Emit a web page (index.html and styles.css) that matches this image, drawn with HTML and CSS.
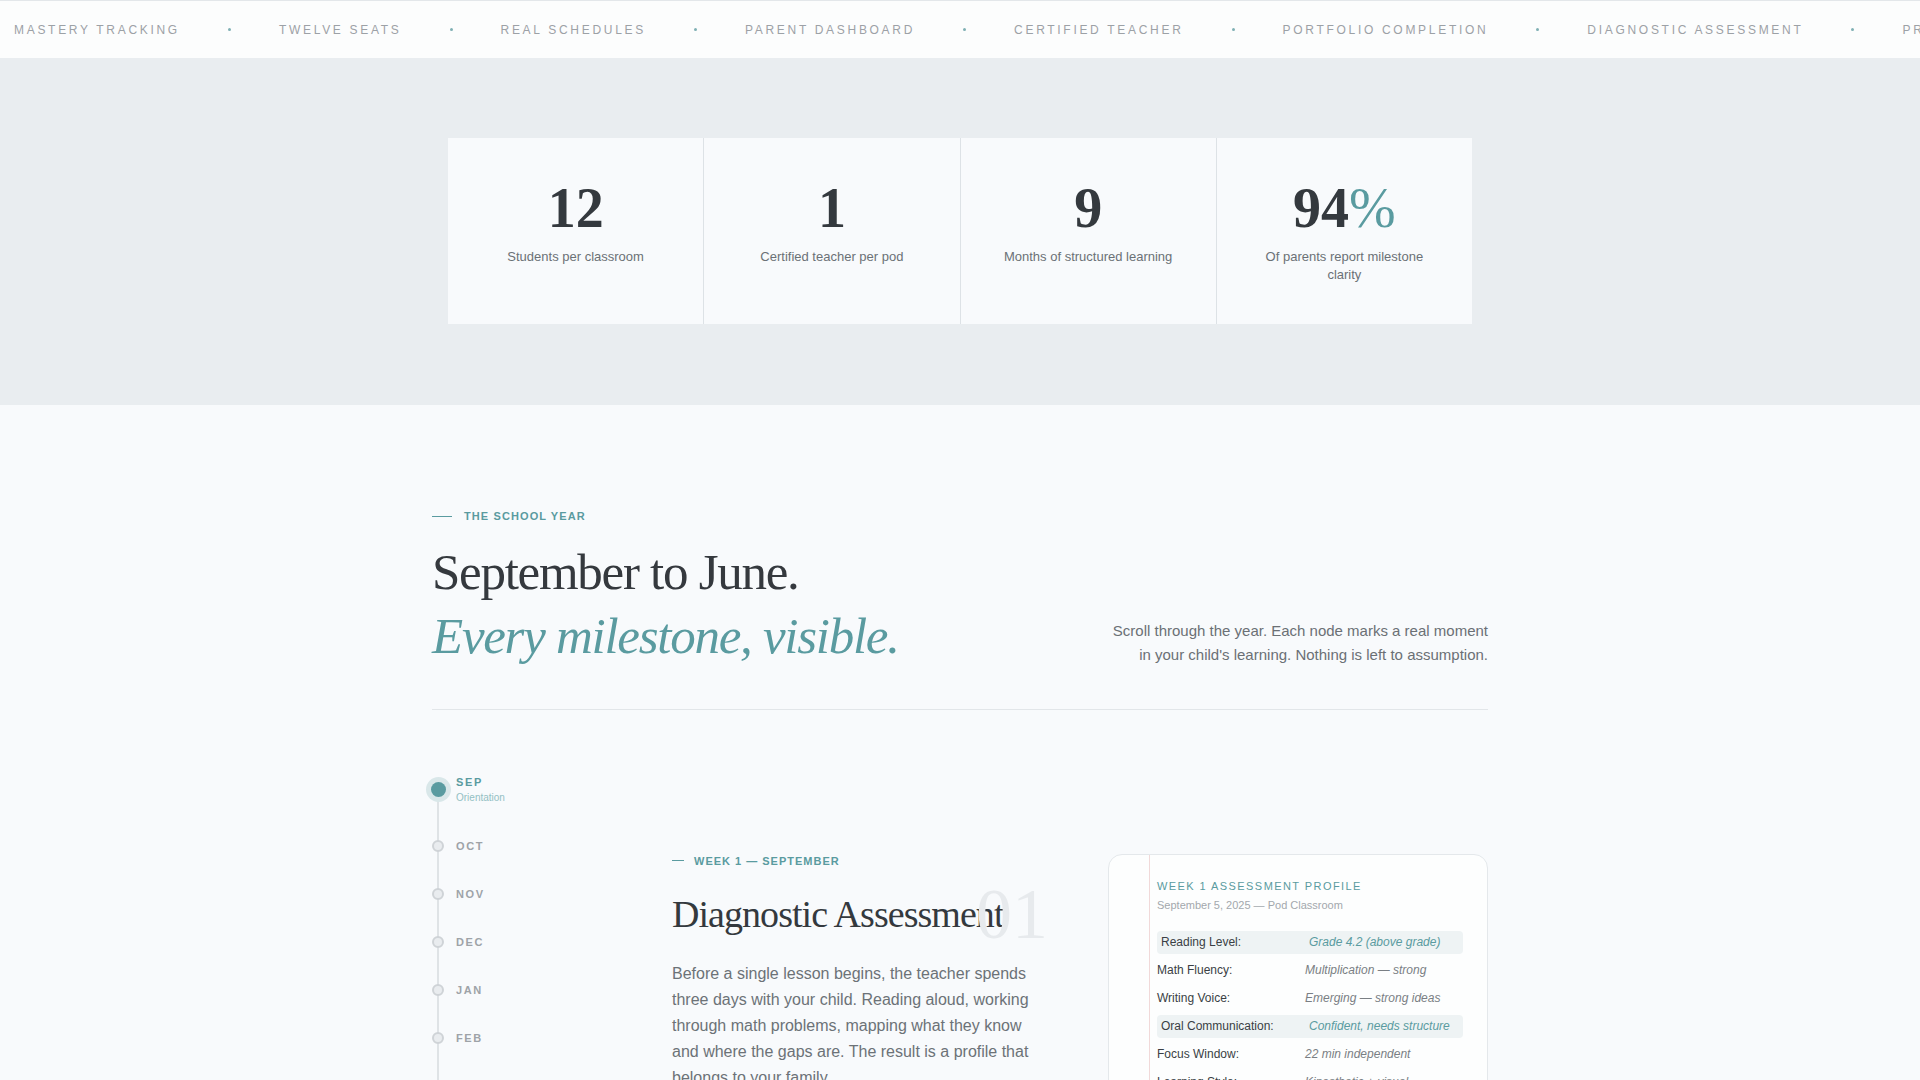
FILE: index.html
```html
<!DOCTYPE html>
<html lang="en">
<head>
  <meta charset="UTF-8">
  <meta name="viewport" content="width=device-width, initial-scale=1.0">
  <title>The School Year</title>
  <link rel="stylesheet" href="styles.css">
</head>
<body>
  <div class="ticker">
    <div class="ticker-track">
      <span>Mastery Tracking</span><i class="dot"></i>
      <span>Twelve Seats</span><i class="dot"></i>
      <span>Real Schedules</span><i class="dot"></i>
      <span>Parent Dashboard</span><i class="dot"></i>
      <span>Certified Teacher</span><i class="dot"></i>
      <span>Portfolio Completion</span><i class="dot"></i>
      <span>Diagnostic Assessment</span><i class="dot"></i>
      <span>Progress Reports</span><i class="dot"></i>
      <span>Mastery Tracking</span>
    </div>
  </div>

  <section class="stats">
    <div class="stats-grid">
      <div class="stat">
        <div class="stat-num">12</div>
        <p>Students per classroom</p>
      </div>
      <div class="stat">
        <div class="stat-num">1</div>
        <p>Certified teacher per pod</p>
      </div>
      <div class="stat">
        <div class="stat-num">9</div>
        <p>Months of structured learning</p>
      </div>
      <div class="stat">
        <div class="stat-num">94<span class="pct">%</span></div>
        <p>Of parents report milestone clarity</p>
      </div>
    </div>
  </section>

  <section class="year">
    <div class="container">
      <div class="year-head">
        <div>
          <div class="eyebrow">The School Year</div>
          <h2>September to June.<br><em>Every milestone, visible.</em></h2>
        </div>
        <p class="year-intro">Scroll through the year. Each node marks a real moment in your child's learning. Nothing is left to assumption.</p>
      </div>

      <div class="year-body">
        <ul class="months">
          <li class="month active">
            <span class="node"></span>
            <div><b>Sep</b><small>Orientation</small></div>
          </li>
          <li class="month"><span class="node"></span><div><b>Oct</b></div></li>
          <li class="month"><span class="node"></span><div><b>Nov</b></div></li>
          <li class="month"><span class="node"></span><div><b>Dec</b></div></li>
          <li class="month"><span class="node"></span><div><b>Jan</b></div></li>
          <li class="month"><span class="node"></span><div><b>Feb</b></div></li>
          <li class="month"><span class="node"></span><div><b>Mar</b></div></li>
          <li class="month"><span class="node"></span><div><b>Apr</b></div></li>
          <li class="month"><span class="node"></span><div><b>May</b></div></li>
          <li class="month"><span class="node"></span><div><b>Jun</b></div></li>
        </ul>

        <article class="step">
          <div class="step-label">Week 1 — September</div>
          <h3>Diagnostic Assessment</h3>
          <span class="step-no">01</span>
          <p>Before a single lesson begins, the teacher spends three days with your child. Reading aloud, working through math problems, mapping what they know and where the gaps are. The result is a profile that belongs to your family.</p>
        </article>

        <div class="profile">
          <div class="profile-title">Week 1 Assessment Profile</div>
          <div class="profile-date">September 5, 2025 — Pod Classroom</div>
          <div class="row hl"><span>Reading Level:</span><em>Grade 4.2 (above grade)</em></div>
          <div class="row"><span>Math Fluency:</span><em>Multiplication — strong</em></div>
          <div class="row"><span>Writing Voice:</span><em>Emerging — strong ideas</em></div>
          <div class="row hl"><span>Oral Communication:</span><em>Confident, needs structure</em></div>
          <div class="row"><span>Focus Window:</span><em>22 min independent</em></div>
          <div class="row"><span>Learning Style:</span><em>Kinesthetic + visual</em></div>
          <div class="row"><span>Social Comfort:</span><em>Warms up by day two</em></div>
        </div>
      </div>
    </div>
  </section>
</body>
</html>
```

FILE: styles.css
```css
body {
  margin: 0;
  padding: 0;
  font-family: "Liberation Sans", Arial, sans-serif;
  background: #f8fafc;
  color: #353a3f;
}

/* ticker */
.ticker {
  background: #fcfdfd;
  border-top: 1px solid #e3e7ea;
  height: 57px;
  overflow: hidden;
  display: flex;
  align-items: center;
}

.ticker-track {
  display: flex;
  align-items: center;
  gap: 48px;
  padding-left: 14px;
  white-space: nowrap;
  font-size: 12px;
  letter-spacing: 2.7px;
  text-transform: uppercase;
  color: #9ca1a6;
}

.ticker-track .dot {
  width: 3px;
  height: 3px;
  border-radius: 50%;
  background: #7fb0b4;
  flex-shrink: 0;
}

/* stats */
.stats {
  background: #e9edf0;
  padding: 80px 0 81px;
}

.stats-grid {
  width: 1024px;
  margin: 0 auto;
  display: grid;
  grid-template-columns: repeat(4, 1fr);
  gap: 1px;
  background: #dde2e6;
}

.stat {
  background: #f8fafc;
  padding: 42px 32px 40px;
  text-align: center;
}

.stat-num {
  font-family: "Liberation Serif", "Times New Roman", serif;
  font-weight: 700;
  font-size: 56px;
  line-height: 1;
  color: #34393e;
}

.stat-num .pct {
  font-weight: 400;
  color: #5a9ba0;
}

.stat p {
  margin: 12px 0 0;
  font-size: 13px;
  line-height: 1.4;
  color: #6b7176;
}

/* year */
.year {
  padding: 103px 0 80px;
}

.container {
  width: 1056px;
  margin: 0 auto;
}

.year-head {
  display: flex;
  justify-content: space-between;
  align-items: flex-end;
  padding-bottom: 40px;
  border-bottom: 1px solid #e2e6e9;
}

.eyebrow {
  display: flex;
  align-items: center;
  gap: 12px;
  font-size: 11px;
  font-weight: 700;
  letter-spacing: 1.1px;
  text-transform: uppercase;
  color: #5a9ba0;
  line-height: 16px;
  margin-bottom: 17px;
}

.eyebrow::before {
  content: "";
  width: 20px;
  height: 1px;
  background: #5a9ba0;
}

.year-head h2 {
  margin: 0;
  font-family: "Liberation Serif", "Times New Roman", serif;
  font-weight: 400;
  font-size: 51px;
  line-height: 1.25;
  letter-spacing: -0.025em;
  color: #35393e;
}

.year-head h2 em {
  color: #5a9ba0;
}

.year-intro {
  width: 380px;
  margin: 0 0 2px;
  font-size: 15px;
  line-height: 1.6;
  text-align: right;
  color: #6b7075;
}

.year-body {
  display: grid;
  grid-template-columns: 180px 1fr 380px;
  gap: 60px;
  margin-top: 64px;
  align-items: start;
}

/* month rail */
.months {
  list-style: none;
  margin: 0;
  padding: 0;
  position: relative;
  display: flex;
  flex-direction: column;
  gap: 32px;
}

.months::before {
  content: "";
  position: absolute;
  left: 5px;
  top: 16px;
  bottom: -40px;
  width: 2px;
  background: #dfe3e6;
}

.month {
  display: flex;
  align-items: center;
  gap: 12px;
  position: relative;
}

.month .node {
  width: 8px;
  height: 8px;
  border-radius: 50%;
  border: 2px solid #cfd3d7;
  background: #e9ecef;
  flex-shrink: 0;
}

.month b {
  display: block;
  font-size: 11px;
  line-height: 16px;
  letter-spacing: 0.15em;
  text-transform: uppercase;
  color: #9ea3a8;
}

.month small {
  display: block;
  font-size: 10px;
  line-height: 16px;
  color: #93c0c3;
}

.month.active .node {
  width: 15px;
  height: 15px;
  margin: 0 -1.5px;
  border: 0;
  background: #5a9ba0;
  box-shadow: 0 0 0 5px #d9e7e9;
}

.month.active b {
  color: #5a9ba0;
}

/* week step */
.step {
  position: relative;
  padding-top: 79px;
}

.step-label {
  display: flex;
  align-items: center;
  gap: 10px;
  font-size: 11px;
  font-weight: 700;
  line-height: 16px;
  letter-spacing: 1px;
  text-transform: uppercase;
  color: #5a9ba0;
}

.step-label::before {
  content: "";
  width: 12px;
  height: 1px;
  background: #5a9ba0;
}

.step h3 {
  margin: 23px 0 0;
  font-family: "Liberation Serif", "Times New Roman", serif;
  font-weight: 400;
  font-size: 38px;
  line-height: 1.2;
  letter-spacing: -0.025em;
  color: #34393e;
}

.step-no {
  position: absolute;
  right: 0;
  top: 104px;
  font-family: "Liberation Serif", "Times New Roman", serif;
  font-size: 72px;
  line-height: 1;
  color: #e7eaed;
}

.step p {
  margin: 24px 0 0;
  font-size: 16px;
  line-height: 26px;
  color: #6c7277;
}

/* profile card */
.profile {
  position: relative;
  margin-top: 80px;
  background: #fdfefe;
  border: 1px solid #e4e8eb;
  border-radius: 14px;
  padding: 24px 24px 24px 48px;
}

.profile::before {
  content: "";
  position: absolute;
  left: 40px;
  top: 0;
  bottom: 0;
  width: 1px;
  background: #f1d9d9;
}

.profile-title {
  font-size: 11px;
  line-height: 1.4;
  letter-spacing: 0.13em;
  text-transform: uppercase;
  color: #5a9ba0;
}

.profile-date {
  margin: 4px 0 17px;
  font-size: 11px;
  line-height: 1.4;
  color: #a3a8ad;
}

.row {
  display: grid;
  grid-template-columns: 148px 1fr;
  padding: 4px 0;
  margin-bottom: 5px;
  font-size: 12px;
  line-height: 15px;
  color: #3a3f44;
}

.row em {
  color: #7a7f84;
}

.row.hl {
  background: #eef3f4;
  border-radius: 4px;
  padding-left: 4px;
}

.row.hl em {
  color: #5a9ba0;
}
```
